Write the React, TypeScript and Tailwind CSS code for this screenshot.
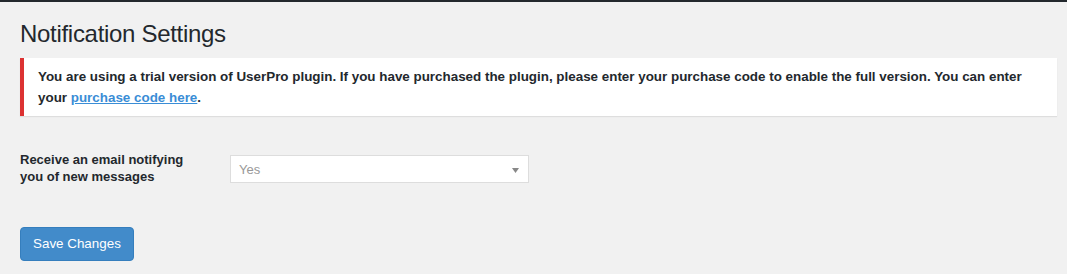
export default function App() {
  return (
    <div className="min-h-[274px] border-t-2 border-[#23282d] bg-[#f1f1f1] font-['Liberation_Sans',Arial,sans-serif] text-[#23282d]">
      <div className="pl-5 pr-[10px]">
        <h1 className="pt-[16px] text-[24px] leading-[31px] font-normal tracking-[-0.3px] text-[#23282d]">
          Notification Settings
        </h1>
        <div className="mt-[9px] border-l-4 border-[#dc3232] bg-white py-2 pl-[14px] pr-3 shadow-[0_1px_1px_rgba(0,0,0,0.08)]">
          <p className="text-[13.4px] leading-[21px] font-bold text-[#23282d]">
            You are using a trial version of UserPro plugin. If you have purchased the plugin, please enter your
            purchase code to enable the full version. You can enter your{" "}
            <a href="#" className="text-[#3a8dd6] underline">
              purchase code here
            </a>
            .
          </p>
        </div>

        <div className="mt-[35px] flex items-start">
          <label className="w-[210px] pr-[35px] text-[13px] leading-[17px] font-bold text-[#23282d]">
            Receive an email notifying you of new messages
          </label>
          <div className="relative mt-[4px] h-[28px] w-[299px] border border-[#dddddd] bg-white">
            <span className="absolute left-[8px] top-[6px] text-[13px] leading-[16px] text-[#999999]">Yes</span>
            <svg className="absolute right-[9px] top-[12px]" width="7" height="5" viewBox="0 0 7 5">
              <path d="M0 0h7L3.5 5z" fill="#888888" />
            </svg>
          </div>
        </div>

        <button className="mt-[42px] h-[34px] rounded-[4px] border border-[#357ebd] bg-[#428bca] px-[12px] text-[13.4px] leading-[20px] text-white">
          Save Changes
        </button>
      </div>
    </div>
  );
}
